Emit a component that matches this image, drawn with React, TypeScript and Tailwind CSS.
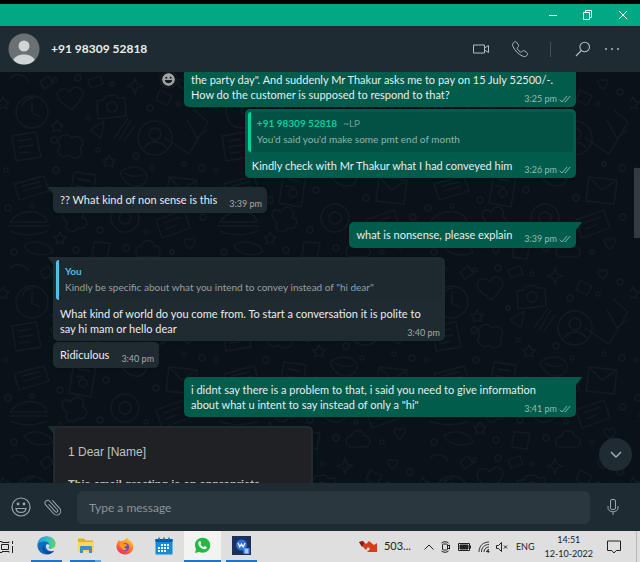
import type { ReactNode } from "react";

const MESSAGE_TEXT = "text-[11px] leading-[15px]";

function Doodles() {
  return (
    <svg className="absolute inset-0 h-full w-full" aria-hidden="true">
      <defs>
        <pattern id="doodles" width="210" height="190" patternUnits="userSpaceOnUse">
          <g fill="none" stroke="#131b22" strokeWidth="1.3" strokeLinecap="round" strokeLinejoin="round">
            <circle cx="32" cy="40" r="16" />
            <path d="M32 30v11l8 4M22 34c2-5 6-8 11-8" />
            <path d="M12 64l24-4 5 25-25 4zM18 69l13-2M19 75l14-2M20 81l9-1" />
            <circle cx="155" cy="66" r="17" />
            <circle cx="155" cy="62" r="6" />
            <path d="M144 76c4-8 18-8 22 0" />
            <path d="M70 20c-8-9-19 2-9 10l11 8 9-11c7-10-7-17-11-7z" />
            <path d="M97 29l6-1 3-4 9-1 3 3 7 0 1 18-28 3z" />
            <circle cx="112" cy="35" r="5" />
            <path d="M194 38l14 12-19 32-24-16M187 48l10 18 10-8" />
            <path d="M135 6l2 6 6 2-6 2-2 6-2-6-6-2 6-2z" />
            <path d="M90 58l14-9-3 17zM114 66l14-20M119 68l12-20M124 69l11-16" />
            <path d="M60 74c-6-10 8-15 12-8 8-5 15 5 8 10 6 8-7 14-11 7-7 5-15-4-9-9z" />
            <path d="M14 112l30-8 5 15-30 9zM22 114l17-4M24 119l17-5" />
            <path d="M74 100l22 3-5 32-22-4zM78 107l12 2M76 114l8 1" />
            <circle cx="83" cy="121" r="4" />
            <path d="M120 100c16-12 33 0 25 10-6 8-21 4-25-10zM125 101c6 4 12 4 18 2" />
            <path d="M169 105l28 3-3 24-28-3zM169 105l13 13 15-10" />
            <path d="M10 150c9-14 34-14 37 0zM8 154h41M10 159c10 5 27 5 37 0" />
            <circle cx="125" cy="146" r="14" />
            <circle cx="125" cy="146" r="6" />
            <path d="M67 150c-10-6-3-17 4-10 4-10 17-3 11 5 9 2 4 14-4 11-5 7-15 3-11-6z" />
            <path d="M156 148l28-10 6 18-28 10zM164 151l16-6M166 157l10-4" />
            <path d="M94 170l16 1-3 16-15-2zM24 174c10-8 26-3 29 6-10 5-23 4-29-6z" />
            <path d="M142 174c0-7 12-7 12 0 8 0 8 11 0 11h-12c-8 0-8-11 0-11z" />
            <path d="M190 168c-5-5-10 2 0 9 9-8 4-14 0-9zM183 9c-4-4-9 2 0 8 8-7 4-12 0-8z" />
            <path d="M3 25l2 4 4 1-3 3 1 4-4-2-4 2 1-4-3-3 4-1zM57 48l2 4 4 1-3 3 1 4-4-2-4 2 1-4-3-3 4-1zM109 83l2 4 4 1-3 3 1 4-4-2-4 2 1-4-3-3 4-1zM60 160l2 4 4 1-3 3 1 4-4-2-4 2 1-4-3-3 4-1z" />
            <path d="M10 6c6-6 16-3 18 3M40 10l8-6 5 7-8 6zM88 8l12-4 3 8-12 4zM160 18l12 6-5 9-11-5z" />
            <circle cx="55" cy="8" r="2" /><circle cx="78" cy="6" r="3" /><circle cx="112" cy="12" r="2" />
            <circle cx="150" cy="36" r="3" /><circle cx="178" cy="32" r="2" /><circle cx="200" cy="20" r="3" />
            <circle cx="54" cy="68" r="3" /><circle cx="88" cy="46" r="2" /><circle cx="136" cy="84" r="3" />
            <circle cx="98" cy="78" r="2" /><circle cx="56" cy="98" r="3" /><circle cx="60" cy="128" r="3" />
            <circle cx="106" cy="118" r="3" /><circle cx="156" cy="126" r="3" /><circle cx="152" cy="96" r="2" />
            <circle cx="202" cy="96" r="3" /><circle cx="203" cy="145" r="3" /><circle cx="100" cy="158" r="3" />
            <circle cx="8" cy="136" r="3" /><circle cx="32" cy="134" r="2" /><circle cx="14" cy="180" r="3" />
            <circle cx="76" cy="178" r="3" /><circle cx="126" cy="176" r="3" /><circle cx="172" cy="180" r="2" />
            <circle cx="6" cy="98" r="2" /><circle cx="146" cy="160" r="2" /><circle cx="184" cy="92" r="2" />
          </g>
        </pattern>
      </defs>
      <rect width="100%" height="100%" fill="url(#doodles)" />
    </svg>
  );
}

function Ticks() {
  return (
    <svg className="h-2 w-3" viewBox="0 0 12 8" fill="none" stroke="currentColor" strokeWidth="0.9" aria-hidden="true">
      <path d="M0.7 4.6L3 7L8 1M5.6 6.6l.5.4L11.2 1" />
    </svg>
  );
}

type BubbleProps = {
  sent?: boolean;
  tail?: boolean;
  time?: string;
  size?: string;
  quote?: ReactNode;
  children: ReactNode;
};

function Bubble({ sent, tail, time, size = "px-[7px] pt-[5px] pb-[3px]", quote, children }: BubbleProps) {
  const colour = sent ? "self-end bg-[#015c4b]" : "self-start bg-[#1f2a31]";
  const corners = !tail ? "rounded-[5px]" : sent ? "rounded-[5px] rounded-tr-none" : "rounded-[5px] rounded-tl-none";
  return (
    <article className={`relative max-w-full shadow-sm ${MESSAGE_TEXT} ${colour} ${corners}`}>
      {tail && (
        <svg
          className={`absolute top-0 h-2 w-1.5 ${sent ? "-right-1.5 text-[#015c4b]" : "-left-1.5 text-[#1f2a31]"}`}
          viewBox="0 0 6 8"
          fill="currentColor"
          aria-hidden="true"
        >
          <path d={sent ? "M0 0h5.400q.8 0 .3.800L0 8z" : "M6 0H1.400q-.8 0-.3.800L6 7z"} />
        </svg>
      )}
      {quote}
      <div className={`flow-root ${size}`}>
        {children}
        {time && (
          <span
            className={`float-right mt-1.5 -mr-[2px] ml-3 flex items-center gap-0.5 text-[9px] leading-3 ${
              sent ? "text-[#94bdb4]" : "text-[#a5aaae]"
            }`}
          >
            {time}
            {sent && <Ticks />}
          </span>
        )}
      </div>
    </article>
  );
}

function Quote({ sent, name, alias, text }: { sent?: boolean; name: string; alias?: string; text: string }) {
  return (
    <div className="px-[3px] pt-[3px]">
      <blockquote
        className={`rounded-[3px] border-l-[3px] pt-[3px] pb-[5px] pl-1.5 text-[10px] leading-4 ${
          sent ? "border-[#06cf9c] bg-[#025144] text-[#8db5ac]" : "border-[#53bdeb] bg-[#1d282f] text-[#9a9fa3]"
        }`}
      >
        <p className={`font-bold ${sent ? "text-[#06cf9c]" : "text-[#53bdeb]"}`}>
          {name}
          {alias && <span className="ml-1.5 font-normal text-[#6f9e94]">{alias}</span>}
        </p>
        <p>{text}</p>
      </blockquote>
    </div>
  );
}

function TitleBar() {
  const button = "flex h-full w-[35px] items-center justify-center";
  return (
    <div className="flex h-[26px] shrink-0 justify-end border-t-4 border-black bg-[#02a884] text-white">
      <button className={button} aria-label="Minimise">
        <svg className="size-3" viewBox="0 0 12 12" stroke="currentColor"><path d="M2 6.5h8" /></svg>
      </button>
      <button className={button} aria-label="Restore">
        <svg className="size-3" viewBox="0 0 12 12" fill="none" stroke="currentColor">
          <path d="M1.500 3.500h6v7h-6zM3.500 3V1.500h6v7H8" />
        </svg>
      </button>
      <button className={button} aria-label="Close">
        <svg className="size-3" viewBox="0 0 12 12" stroke="currentColor"><path d="M2 2l8 8M10 2l-8 8" /></svg>
      </button>
    </div>
  );
}

function ChatHeader() {
  return (
    <header className="flex h-[46px] shrink-0 items-center bg-[#1f2b32] pr-[18px] pl-2 text-[#b3bbc0]">
      <svg className="size-8" viewBox="0 0 32 32" role="img" aria-label="Contact photo">
        <defs><clipPath id="avatar"><circle cx="16" cy="16" r="15.500" /></clipPath></defs>
        <circle cx="16" cy="16" r="15.500" fill="#6a7175" />
        <g clipPath="url(#avatar)" fill="#cfd4d6">
          <circle cx="16" cy="13" r="5.500" />
          <path d="M5 29c0-10 22-10 22 0v4H5z" />
        </g>
      </svg>
      <h1 className="ml-[11px] flex-1 text-xs font-bold text-[#e9edef]">+91 98309 52818</h1>
      <button aria-label="Video call">
        <svg className="h-3 w-[18px]" viewBox="0 0 18 12" fill="none" stroke="currentColor">
          <path d="M1.500 2h11v8h-11zM12.500 5l4-2.500v7L12.500 7z" />
        </svg>
      </button>
      <button className="ml-[21px]" aria-label="Voice call">
        <svg className="size-[18px]" viewBox="0 0 18 18" fill="none" stroke="currentColor" strokeLinejoin="round">
          <path d="M2.600 2.600C4 1.300 5.200 1.600 6 2.800l1.300 2c.6 1 .3 1.900-.5 2.600-.7.600-.7 1.100-.3 1.700.7 1.200 1.600 2.100 2.800 2.800.6.400 1.100.3 1.700-.4.700-.8 1.600-1.100 2.600-.5l2 1.300c1.200.8 1.400 2 .2 3.200-1.300 1.300-2.600 1.300-4.200.6C7.400 14.200 3.800 10.600 2 6.500c-.7-1.500-.6-2.800.6-3.900z" />
        </svg>
      </button>
      <span className="ml-[21px] h-[15px] w-px bg-[#465057]" />
      <button className="ml-6" aria-label="Search">
        <svg className="size-4" viewBox="0 0 16 16" fill="none" stroke="currentColor" strokeWidth="1.100">
          <circle cx="9.700" cy="6" r="4.800" /><path d="M6.300 9.500L1 15" />
        </svg>
      </button>
      <button className="ml-[11px]" aria-label="More options">
        <svg className="h-4 w-5" viewBox="0 0 20 16" fill="currentColor">
          <circle cx="4" cy="8" r="1" /><circle cx="10" cy="8" r="1" /><circle cx="16" cy="8" r="1" />
        </svg>
      </button>
    </header>
  );
}

function Conversation() {
  return (
    <main className="relative min-h-0 flex-1 overflow-hidden bg-[#0a1219] text-[#e9edef]">
      <Doodles />
      <div className="relative flex flex-col pr-16 pl-[53px]">
        <div className="flex items-start justify-end gap-[9px]">
          <button className="mt-px flex size-[13px] items-center justify-center rounded-full bg-[#a0a3a5] outline-3 outline-[#12181c]" aria-label="React">
            <svg className="size-[13px]" viewBox="0 0 13 13" fill="#171d21">
              <circle cx="4.300" cy="4.800" r="1" /><circle cx="8.700" cy="4.800" r="1" /><path d="M2.800 7h7.400c-.4 4.400-7 4.400-7.400 0z" />
            </svg>
          </button>
          <div className="-mt-2">
            <Bubble sent time="3:25 pm" size="w-[392px] px-[7px] pt-2 pb-[2px]">
              the party day". And suddenly Mr Thakur asks me to pay on 15 July 52500/-.<br />
              How do the customer is supposed to respond to that?
            </Bubble>
          </div>
        </div>
        <div className="mt-0.5 flex flex-col">
          <Bubble
            sent
            time="3:26 pm"
            size="px-[7px] pt-1.5 pb-[2px]"
            quote={<Quote sent name="+91 98309 52818" alias="~LP" text="You'd said you'd make some pmt end of month" />}
          >
            Kindly check with Mr Thakur what I had conveyed him
          </Bubble>
        </div>
        <div className="mt-[9px] flex flex-col"><Bubble tail time="3:39 pm">?? What kind of non sense is this</Bubble></div>
        <div className="mt-[9px] flex flex-col"><Bubble sent tail time="3:39 pm">what is nonsense, please explain</Bubble></div>
        <div className="mt-[9px] flex flex-col gap-px">
          <Bubble
            tail
            time="3:40 pm"
            size="w-[392px] px-[7px] pt-1.5 pb-[2px]"
            quote={<Quote name="You" text={'Kindly be specific about what you intend to convey instead of "hi dear"'} />}
          >
            What kind of world do you come from. To start a conversation it is polite to<br />say hi mam or hello dear
          </Bubble>
          <Bubble time="3:40 pm">Ridiculous</Bubble>
        </div>
        <div className="mt-[9px] flex flex-col">
          <Bubble sent tail time="3:41 pm" size="w-[392px] px-[7px] pt-[5px] pb-[2px]">
            i didnt say there is a problem to that, i said you need to give information<br />
            about what u intent to say instead of only a "hi"
          </Bubble>
        </div>
        <div className="mt-[9px] flex flex-col">
          <Bubble tail size="w-[260px] p-0.5">
            <div className="rounded-[3px] bg-[#202124] px-[13px] pt-4 pb-8 font-['Liberation_Sans',Arial,sans-serif] text-[#bdc1c6]">
              <p className="text-xs leading-4">1 Dear [Name]</p>
              <p className="mt-4 text-[11px] leading-4 font-bold">This email greeting is an appropriate</p>
            </div>
          </Bubble>
        </div>
      </div>
      <span className="absolute top-24 right-0 h-[70px] w-1.5 bg-[#343b40]" />
      <button className="absolute right-2 bottom-3 flex size-[33px] items-center justify-center rounded-full bg-[#1f2b32]" aria-label="Scroll to latest">
        <svg className="h-2 w-3" viewBox="0 0 12 8" fill="none" stroke="#a9b1b5" strokeWidth="1.400"><path d="M1 1l5 5 5-5" /></svg>
      </button>
    </main>
  );
}

function Composer() {
  return (
    <footer className="flex h-12 shrink-0 items-center bg-[#1f2b32] pr-5 pl-[11px] text-[#9da6ab]">
      <button aria-label="Emoji">
        <svg className="size-5" viewBox="0 0 20 20" fill="none" stroke="currentColor" strokeWidth="1.200">
          <circle cx="10" cy="10" r="9" /><path d="M5 11.500h10c-.5 5.300-9.500 5.300-10 0z" />
          <circle cx="7" cy="7" r=".8" fill="currentColor" /><circle cx="13" cy="7" r=".8" fill="currentColor" />
        </svg>
      </button>
      <button className="ml-[13px]" aria-label="Attach">
        <svg className="size-[18px]" viewBox="0 0 18 18" fill="none" stroke="currentColor" strokeLinecap="round">
          <path transform="translate(9 9) rotate(-42)" d="M4 -5V5.500a4 4 0 0 1-8 0V-6.500a2.700 2.700 0 0 1 5.400 0V5a1.400 1.400 0 0 1-2.800 0V-4.500" />
        </svg>
      </button>
      <input
        className="ml-[15px] h-[33px] min-w-0 flex-1 rounded-md bg-[#2a373f] px-3 text-xs text-[#e9edef] outline-none placeholder:text-[#8b959b]"
        aria-label="Type a message"
        placeholder="Type a message"
      />
      <button className="ml-4" aria-label="Record voice message">
        <svg className="h-[18px] w-3.5" viewBox="0 0 14 18" fill="none" stroke="currentColor">
          <rect x="4.500" y="1.500" width="5" height="10" rx="1.500" /><path d="M2 8v2c0 5 10 5 10 0V8M7 14v3" />
        </svg>
      </button>
    </footer>
  );
}

function AppButton({ label, line = "", active, children }: { label: string; line?: string; active?: boolean; children: ReactNode }) {
  return (
    <button aria-label={label} className={`flex h-full w-[37px] flex-col items-center ${active ? "bg-[#f3f3f2]" : ""}`}>
      <span className="flex flex-1 items-center">{children}</span>
      <span className={`h-0.5 ${line}`} />
    </button>
  );
}

function Taskbar() {
  return (
    <nav className="flex h-[31px] shrink-0 items-center bg-[#dfdfdf] text-[#222]">
      <button aria-label="Task view" className="w-7">
        <svg className="h-3.5 w-3.5" viewBox="0 0 14 14" fill="none" stroke="currentColor">
          <path d="M1.500 4.500h7v5h-7zM0 1.500h2v1h7v-1M0 12.500h2v-1h7v1M12.500 1v3M12.500 6v7" />
        </svg>
      </button>
      <div className="flex h-full gap-0.5">
        <AppButton label="Edge" line="w-[31px] bg-[#1976d2]">
          <svg className="size-[19px]" viewBox="0 0 20 20">
            <defs>
              <linearGradient id="edge" x1="0" x2="1"><stop stopColor="#1b9de2" /><stop offset=".6" stopColor="#35c1c5" /><stop offset="1" stopColor="#66d84d" /></linearGradient>
            </defs>
            <path d="M.5 10C.5 4 5 .5 10 .5c5.500 0 9 3.500 9.500 7.500L12 9.500 17.500 16c-2 2.300-4.500 3.500-7.500 3.500C4.500 19.500.5 15 .5 10z" fill="#0f6cbd" />
            <path d="M.6 9C1 3.500 5 .5 10 .5c6 0 9.600 4.500 9.500 8.500 0 3-2.500 4.500-5.500 4.200-2-.2-2-1-1.300-2C14 8 11 5.500 7.500 5.800 4 6 1 7.500.6 9z" fill="url(#edge)" />
            <path d="M7.500 9c-1 3.500 1.500 7.500 6 7.500 1.800 0 3.500-.5 4.500-1.200-1 1.700-3 3.200-5.500 3.900C7 19 3.500 13 7.500 9z" fill="#0b4a99" />
            <path d="M9.500 9.500c1-1.500 3-1 3.300.3.200 1.200-1 1.800-.3 2.700 1.500 1.500 4.500 1 6.300-.3-.2 1.500-.7 2.500-1.300 3.300-4 1.500-8.800-1-8-6z" fill="#dfdfdf" />
          </svg>
        </AppButton>
        <AppButton label="File Explorer" line="w-[31px] border-r-[6px] border-[#62a5df] bg-[#1976d2]">
          <svg className="h-[17px] w-[18px]" viewBox="0 0 18 17">
            <path d="M1 1.500h6l1.500 2H16v11H1z" fill="#e8ad22" /><path d="M1 5h16v10H1z" fill="#fbd667" />
            <path d="M3 16v-6q0-1 1-1h10q1 0 1 1v6h-3v-3H6v3z" fill="#3b8ed2" />
          </svg>
        </AppButton>
        <AppButton label="Firefox">
          <svg className="size-[18px]" viewBox="0 0 18 18">
            <defs><linearGradient id="fox" x1=".8" y1="0" x2=".3" y2="1"><stop stopColor="#ffd93b" /><stop offset=".5" stopColor="#ff8124" /><stop offset="1" stopColor="#ef2b5c" /></linearGradient></defs>
            <path d="M3 3l1.500 1.500C6 3.500 7 3.300 8 3.500 9 2 10.500 1 11.500.5c0 2 4.500 3.500 5.500 7 1.500 6-3 10-8 10s-9-4-8.500-9C.8 6 2 4.500 3 3z" fill="url(#fox)" />
            <circle cx="9" cy="10" r="4" fill="#7542c9" />
            <path d="M3.500 6c2-.7 4 0 5 1l3 .8c-.3 1.200-2 1.300-2.800 2.200-.5.700.5 2 2.500 1.500-2 3.500-7 1.500-7.700-5.500z" fill="#ff9a27" />
          </svg>
        </AppButton>
        <AppButton label="Calendar">
          <svg className="size-[18px]" viewBox="0 0 18 18">
            <path d="M.5 2h17v15.500H.5z" fill="#168bd5" /><path d="M.5 2h17v3H.5z" fill="#075c9e" />
            <path d="M4 .5v3M9 .5v3M14 .5v3" stroke="#0d73bd" strokeWidth="1.500" />
            <path d="M6 8h9M3 11h12M3 14h9" stroke="#fff" strokeWidth="2" strokeDasharray="2 1" />
          </svg>
        </AppButton>
        <AppButton label="WhatsApp" active line="w-full bg-[#1976d2]">
          <svg className="size-[17px]" viewBox="0 0 17 17">
            <path d="M1 16l1-4C-1 6 3 .8 8.700.8c4.300 0 7.500 3.200 7.500 7.400 0 6-6 9-11.200 6.700z" fill="#25b943" />
            <path d="M5.500 4.200l1 0 .8 2-.8 1c.7 1.500 1.700 2.300 3.200 3l1-1.200 2 1c.1 3-3 2.500-5 1.300C5.500 10 4 8 4.300 5.800c.2-.8.600-1.300 1.200-1.600z" fill="#fff" />
          </svg>
        </AppButton>
        <AppButton label="Workspace" line="w-[31px] bg-[#1976d2]">
          <svg className="size-[19px]" viewBox="0 0 19 19">
            <path d="M0 0h19v19H0z" fill="#1d315d" /><circle cx="9.500" cy="9" r="5.500" fill="#2f6ee4" />
            <path d="M6 7l1.800 4L9.500 8l1.700 3L13 7" stroke="#fff" strokeWidth="1.200" fill="none" />
            <rect x="11.500" y="12" width="6" height="6" rx="1" fill="#5b92f4" /><path d="M13 14h3M13 16h3" stroke="#fff" />
          </svg>
        </AppButton>
      </div>
      <div className="ml-auto flex h-full items-center">
        <svg className="h-[13px] w-[19px]" viewBox="0 0 19 13" aria-hidden="true">
          <path d="M0 2l4-1 3 3 3-3 5 4 3-2v9H8l3-3-2-2-2 3-4-4z" fill="#d5401b" /><path d="M0 2l4-1 1 2-2 4z" fill="#74221b" />
        </svg>
        <span className="ml-1.5 text-[11px]">503...</span>
        <div className="ml-[13px] flex items-center gap-1.5">
          <svg className="h-2 w-2.5" viewBox="0 0 10 8" fill="none" stroke="currentColor"><path d="M.5 6.500L5 2l4.500 4.500" /></svg>
          <svg className="h-3 w-3" viewBox="0 0 12 12" fill="none" stroke="currentColor">
            <rect x="2.500" y="3" width="5" height="6" rx="1" /><path d="M7.500 5l2-1v4l-2-1M1.500 2C3 .3 7 .3 8.500 2M1.500 10c1.500 1.700 5.500 1.700 7 0" />
          </svg>
          <svg className="h-2 w-3.5" viewBox="0 0 14 8" fill="none" stroke="currentColor"><path d="M.5.5h11v7H.5zM12.500 2.500v3" /><path d="M2 2h8v4H2z" fill="currentColor" /></svg>
          <svg className="h-3 w-3" viewBox="0 0 12 12" fill="none" stroke="currentColor" strokeWidth=".9">
            <path d="M1 11C1 5 5 1 11 1M3.500 11C3.500 6.500 6.500 3.500 11 3.500M6 11c0-3 2-5 5-5M8.500 11c0-1.500 1-2.500 2.500-2.500" /><circle cx="10.200" cy="10.500" r=".8" fill="currentColor" />
          </svg>
          <svg className="h-2.5 w-3" viewBox="0 0 12 10" fill="none" stroke="currentColor"><path d="M.5 3.500h2l3-3v9l-3-3h-2zM8 3.500l3 3M11 3.500l-3 3" /></svg>
        </div>
        <span className="ml-2 text-[9px]">ENG</span>
        <time className="ml-2.5 text-center text-[9px] leading-[14px]">14:51<br />12-10-2022</time>
        <button className="ml-[14px]" aria-label="Notifications">
          <svg className="size-3.5" viewBox="0 0 14 14" fill="none" stroke="currentColor"><path d="M.5 1h13v9.500H9.300L7 13l-2.300-2.500H.5z" /></svg>
        </button>
        <span className="mr-[3px] ml-[15px] h-full w-px bg-[#b9b9b9]" />
      </div>
    </nav>
  );
}

export default function App() {
  return (
    <div className="flex h-screen flex-col overflow-hidden font-['Lato','Open_Sans',sans-serif]">
      <TitleBar />
      <ChatHeader />
      <Conversation />
      <Composer />
      <Taskbar />
    </div>
  );
}
